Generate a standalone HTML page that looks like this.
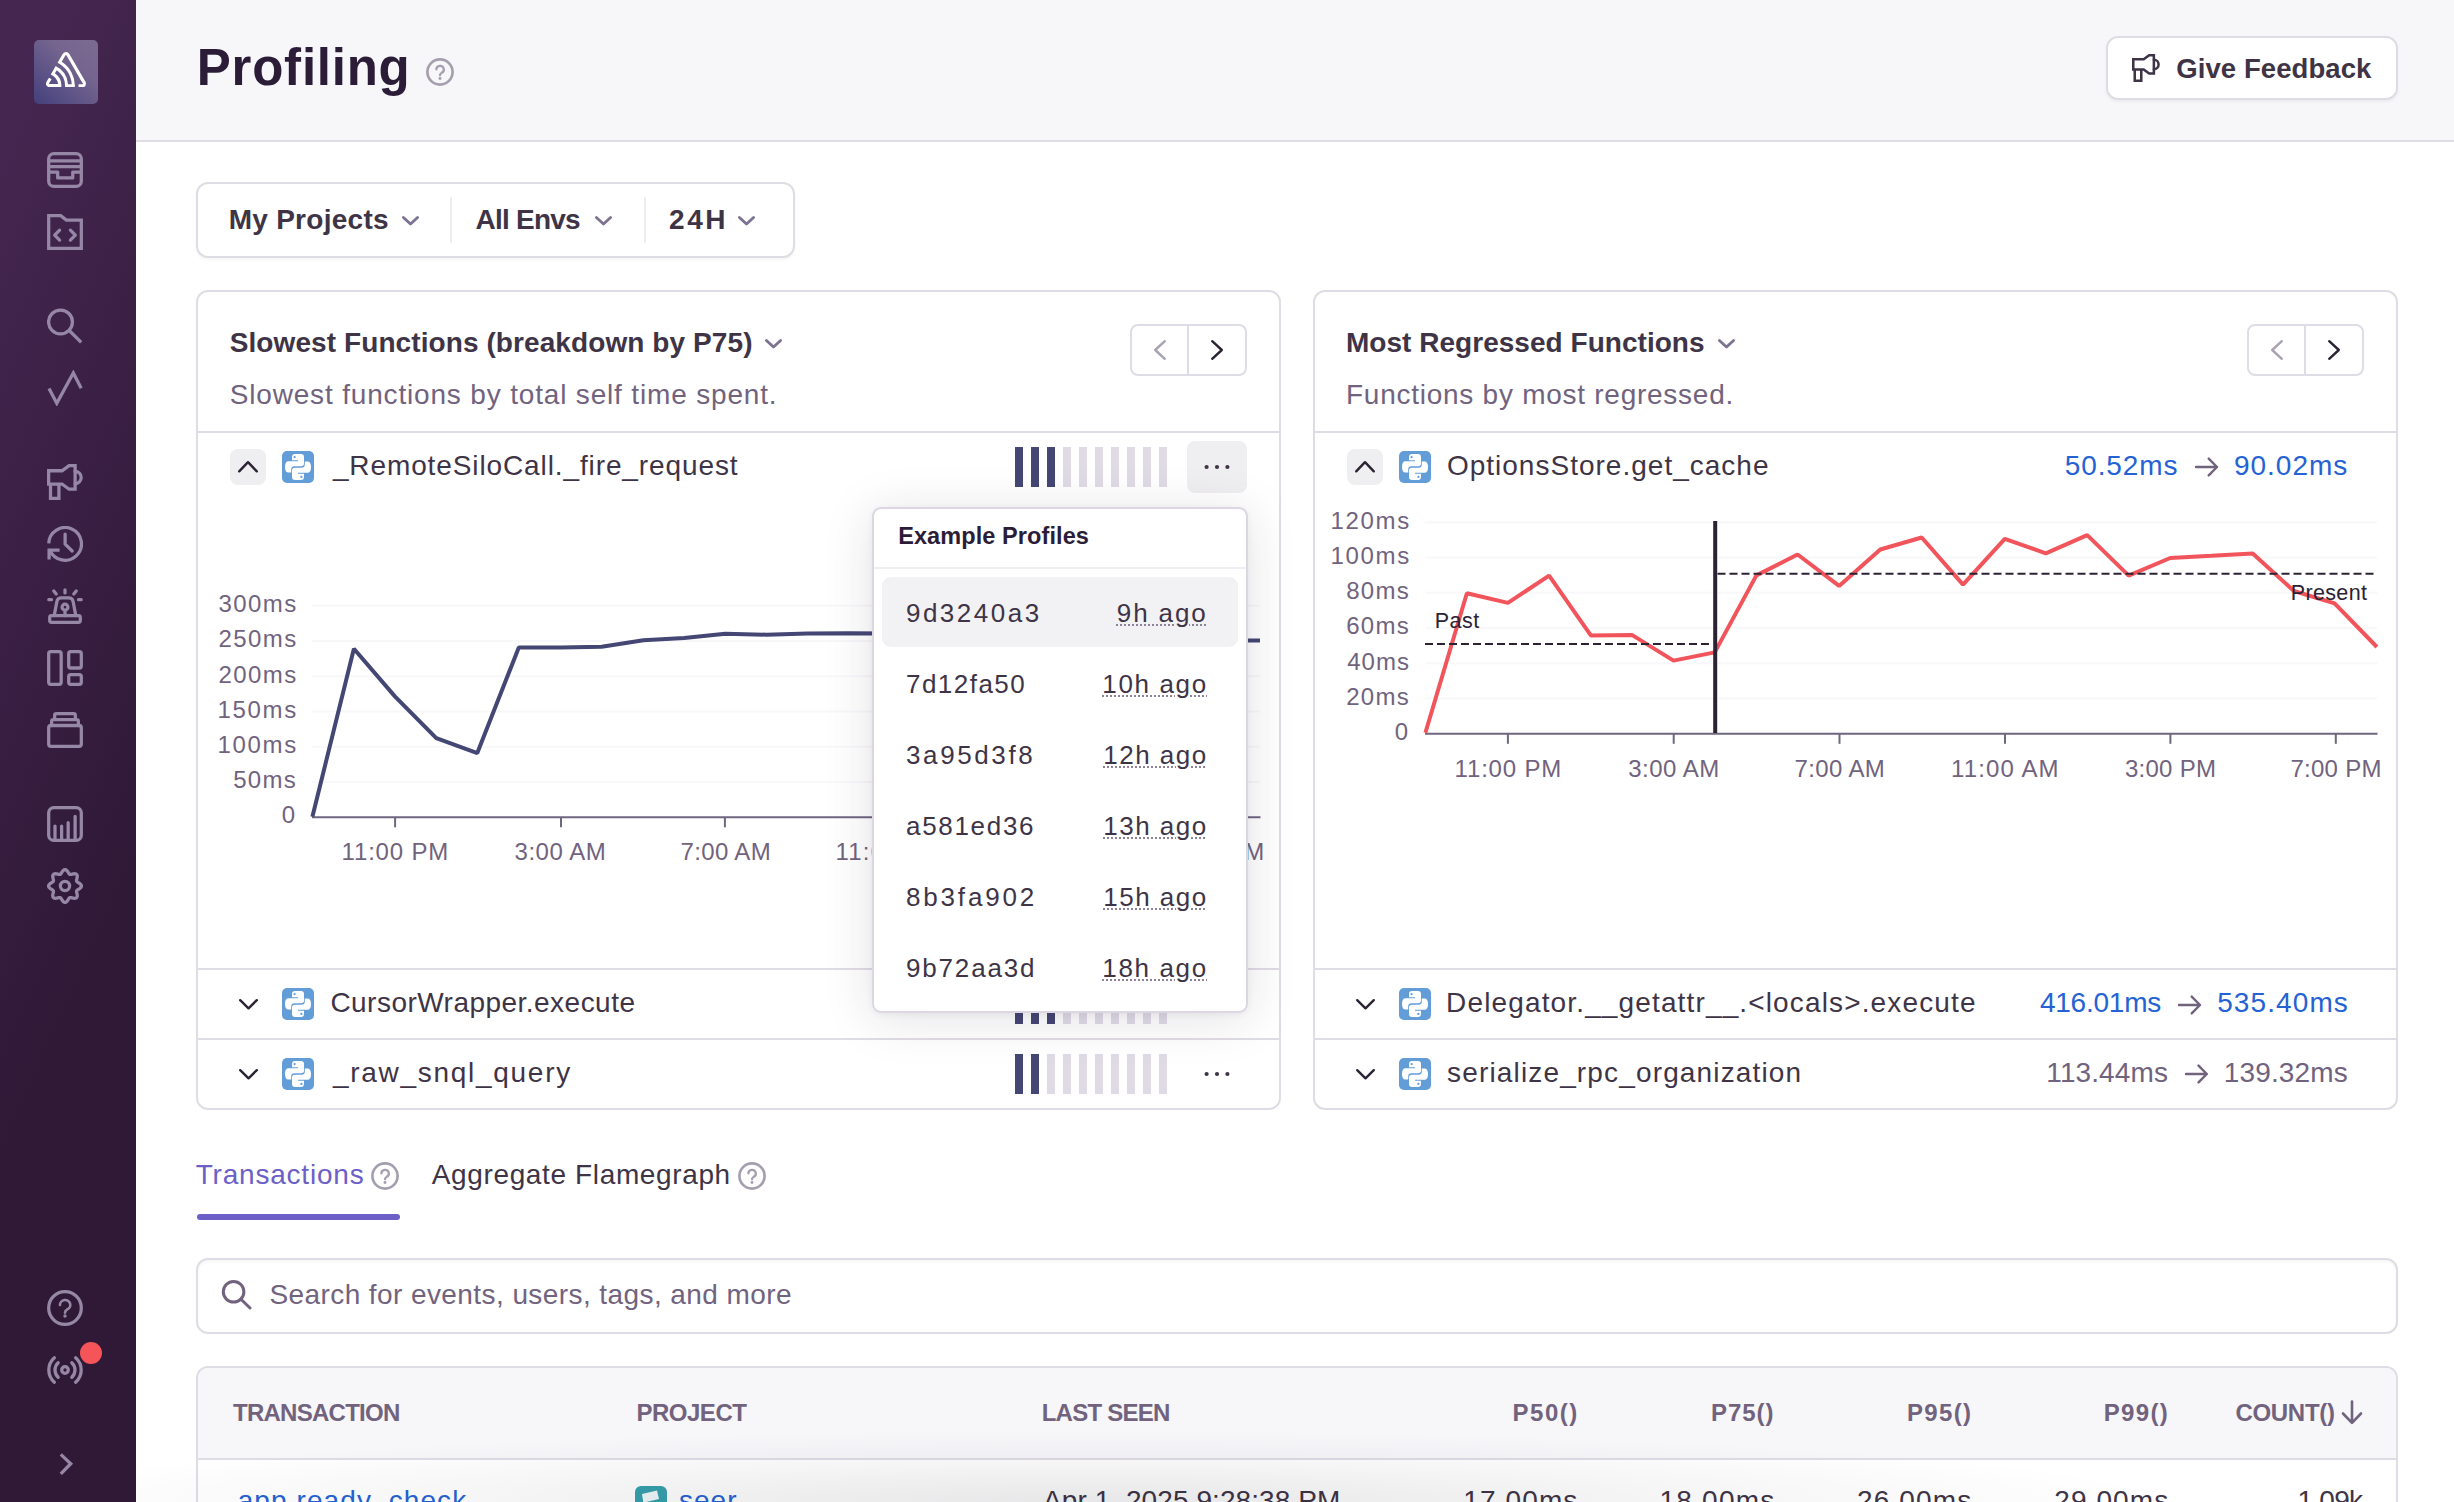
<!DOCTYPE html><html lang="en"><head><meta charset="utf-8"><title>Profiling</title><style>
*{box-sizing:border-box}
html,body{margin:0;padding:0}
body{width:2454px;height:1502px;overflow:hidden;position:relative;background:#fff;font-family:"Liberation Sans",sans-serif}
.a{position:absolute}
.t{position:absolute;white-space:pre;line-height:1;font-family:"Liberation Sans",sans-serif}
.box{position:absolute;border:2px solid #e0dce5;background:#fff}
.hl{position:absolute;height:2px;background:#e0dce5}
</style></head><body>
<div class="a" style="left:136px;top:0;width:2318px;height:140px;background:#f7f6f9"></div><div class="hl" style="left:136px;top:140px;width:2318px"></div>
<div class="a" style="left:0;top:0;width:136px;height:1502px;background:linear-gradient(294.17deg,#2f1937 35.57%,#452650 92.42%)"></div>
<div class="a" style="left:34px;top:40px;width:64px;height:64px;border-radius:5px;background:linear-gradient(42deg,#44407c 0%,#5c5286 32%,#76668f 66%,#7b6b93 100%)"></div>
<svg class="a" style="left:46.2px;top:52.3px" width="40" height="35.2" viewBox="0 0 50 44" ><path d="M29,2.26a4.67,4.67,0,0,0-8,0L14.42,13.53A32.21,32.21,0,0,1,32.17,40.19H27.55A27.68,27.68,0,0,0,12.09,17.47L6,28a15.92,15.92,0,0,1,9.23,12.17H4.62A.76.76,0,0,1,4,39.06l2.94-5a10.74,10.74,0,0,0-3.36-1.9l-2.91,5a4.54,4.54,0,0,0,1.69,6.24A4.66,4.66,0,0,0,4.62,44H19.15a19.4,19.4,0,0,0-8-17.31l2.31-4A23.87,23.87,0,0,1,23.76,44H36.07a35.88,35.88,0,0,0-16.41-31.8l4.67-8a.77.77,0,0,1,1.05-.27c.53.29,20.29,34.77,20.66,35.17a.76.76,0,0,1-.68,1.13H40.6q.09,1.91,0,3.81h4.78A4.59,4.59,0,0,0,50,39.43a4.49,4.49,0,0,0-.62-2.28Z" fill="#fff"/></svg>
<svg class="a" style="left:47px;top:152px" width="36" height="36" viewBox="0 0 16 16" ><g fill="none" stroke="#9687a6" stroke-width="1.45" stroke-linecap="round" stroke-linejoin="round"><rect x=".75" y=".75" width="14.5" height="14.5" rx="2.3"/><path d="M.75 3.9H15.25M.75 6.5H15.25M.75 8.9H4.75V11.5H11.45V8.9H15.25"/></g></svg>
<svg class="a" style="left:47px;top:214px" width="36" height="36" viewBox="0 0 16 16" ><g fill="none" stroke="#9687a6" stroke-width="1.45" stroke-linecap="round" stroke-linejoin="round"><path d="M.75 .75H6.1L8.6 2.7H15.25V15.25H.75Z" stroke-linejoin="miter"/><path d="M5.6 7.2L3.4 9.4L5.6 11.6M10.4 7.2L12.6 9.4L10.4 11.6"/></g></svg>
<svg class="a" style="left:47px;top:307.5px" width="36" height="36" viewBox="0 0 16 16" ><g fill="none" stroke="#9687a6" stroke-width="1.45" stroke-linecap="round" stroke-linejoin="round"><circle cx="6" cy="6.2" r="5.3"/><path d="M10 10.1L15.2 15.3" stroke-linecap="butt"/></g></svg>
<svg class="a" style="left:47px;top:370px" width="36" height="36" viewBox="0 0 16 16" ><g fill="none" stroke="#9687a6" stroke-width="1.45" stroke-linecap="round" stroke-linejoin="round"><path d="M.9 8.2L4.35 14.8L11.7 1.3L15.2 8.1" stroke-linejoin="miter" stroke-linecap="butt"/></g></svg>
<svg class="a" style="left:47px;top:464px" width="36" height="36" viewBox="0 0 16 16" ><g fill="none" stroke="#9687a6" stroke-width="1.45" stroke-linecap="round" stroke-linejoin="round"><path d="M.73 3H6.7L9.8 .74H12.5V11.2H9.8L6.7 8.9H.73Z" stroke-linejoin="miter"/><path d="M12.5 3.3A2.7 2.7 0 0 1 12.5 8.7"/><path d="M1.56 8.9V15.3H5.3V8.9" stroke-linejoin="miter" stroke-linecap="butt"/></g></svg>
<svg class="a" style="left:47px;top:526px" width="36" height="36" viewBox="0 0 16 16" ><g fill="none" stroke="#9687a6" stroke-width="1.45" stroke-linecap="round" stroke-linejoin="round"><path d="M.78 7.7A7.27 7.27 0 1 1 1.31 10.7" stroke-linecap="butt"/><path d="M5.6 10.75H.93V14.9" stroke-linejoin="miter" stroke-linecap="butt"/><path d="M8.05 3.6V8.05L11.2 11.1"/></g></svg>
<svg class="a" style="left:47px;top:588px" width="36" height="36" viewBox="0 0 16 16" ><g fill="none" stroke="#9687a6" stroke-width="1.45" stroke-linecap="round" stroke-linejoin="round"><rect x="1.2" y="12.3" width="13.6" height="2.95" rx=".8"/><path d="M3.2 12.3L4.4 6Q4.7 4.4 6.3 4.4H9.7Q11.3 4.4 11.6 6L12.8 12.3"/><circle cx="8" cy="8.5" r="1.3"/><path d="M8 9.9V12.3M8 .8V2.2M3 1.3L4.1 2.7M13 1.3L11.9 2.7M.8 5.2H2M14 5.2H15.2"/></g></svg>
<svg class="a" style="left:47px;top:650px" width="36" height="36" viewBox="0 0 16 16" ><g fill="none" stroke="#9687a6" stroke-width="1.45" stroke-linecap="round" stroke-linejoin="round"><rect x=".75" y=".75" width="5.55" height="14.5" rx=".9"/><rect x="9.65" y=".75" width="5.6" height="7.25" rx=".9"/><rect x="9.65" y="10.9" width="5.6" height="4.35" rx=".9"/></g></svg>
<svg class="a" style="left:47px;top:712px" width="36" height="36" viewBox="0 0 16 16" ><g fill="none" stroke="#9687a6" stroke-width="1.45" stroke-linecap="round" stroke-linejoin="round"><rect x=".75" y="6" width="14.5" height="9.25" rx="1"/><path d="M2.05 6V4.2Q2.05 3.4 2.85 3.4H13.15Q13.95 3.4 13.95 4.2V6M3.4 3.4V1.5Q3.4 .75 4.2 .75H11.8Q12.6 .75 12.6 1.5V3.4"/></g></svg>
<svg class="a" style="left:47px;top:806px" width="36" height="36" viewBox="0 0 16 16" ><g fill="none" stroke="#9687a6" stroke-width="1.45" stroke-linecap="round" stroke-linejoin="round"><rect x=".75" y=".75" width="14.5" height="14.5" rx="2.3"/><path d="M3.55 15V8.9M6.5 15V8.9M9.4 15V7.4M12.5 15V4.6"/></g></svg>
<svg class="a" style="left:47px;top:868px" width="36" height="36" viewBox="0 0 16 16" ><g fill="none" stroke="#9687a6" stroke-width="1.45" stroke-linecap="round" stroke-linejoin="round"><path d="M8.00 0.70 L8.28 0.75 L8.56 0.88 L8.82 1.10 L9.05 1.37 L9.26 1.67 L9.44 1.98 L9.62 2.27 L9.78 2.52 L9.95 2.71 L10.14 2.83 L10.36 2.88 L10.62 2.87 L10.91 2.81 L11.23 2.72 L11.58 2.64 L11.95 2.57 L12.30 2.54 L12.64 2.57 L12.93 2.67 L13.16 2.84 L13.33 3.07 L13.43 3.36 L13.46 3.70 L13.43 4.05 L13.36 4.42 L13.28 4.77 L13.19 5.09 L13.13 5.38 L13.12 5.64 L13.17 5.86 L13.29 6.05 L13.48 6.22 L13.73 6.38 L14.02 6.56 L14.33 6.74 L14.63 6.95 L14.90 7.18 L15.12 7.44 L15.25 7.72 L15.30 8.00 L15.25 8.28 L15.12 8.56 L14.90 8.82 L14.63 9.05 L14.33 9.26 L14.02 9.44 L13.73 9.62 L13.48 9.78 L13.29 9.95 L13.17 10.14 L13.12 10.36 L13.13 10.62 L13.19 10.91 L13.28 11.23 L13.36 11.58 L13.43 11.95 L13.46 12.30 L13.43 12.64 L13.33 12.93 L13.16 13.16 L12.93 13.33 L12.64 13.43 L12.30 13.46 L11.95 13.43 L11.58 13.36 L11.23 13.28 L10.91 13.19 L10.62 13.13 L10.36 13.12 L10.14 13.17 L9.95 13.29 L9.78 13.48 L9.62 13.73 L9.44 14.02 L9.26 14.33 L9.05 14.63 L8.82 14.90 L8.56 15.12 L8.28 15.25 L8.00 15.30 L7.72 15.25 L7.44 15.12 L7.18 14.90 L6.95 14.63 L6.74 14.33 L6.56 14.02 L6.38 13.73 L6.22 13.48 L6.05 13.29 L5.86 13.17 L5.64 13.12 L5.38 13.13 L5.09 13.19 L4.77 13.28 L4.42 13.36 L4.05 13.43 L3.70 13.46 L3.36 13.43 L3.07 13.33 L2.84 13.16 L2.67 12.93 L2.57 12.64 L2.54 12.30 L2.57 11.95 L2.64 11.58 L2.72 11.23 L2.81 10.91 L2.87 10.62 L2.88 10.36 L2.83 10.14 L2.71 9.95 L2.52 9.78 L2.27 9.62 L1.98 9.44 L1.67 9.26 L1.37 9.05 L1.10 8.82 L0.88 8.56 L0.75 8.28 L0.70 8.00 L0.75 7.72 L0.88 7.44 L1.10 7.18 L1.37 6.95 L1.67 6.74 L1.98 6.56 L2.27 6.38 L2.52 6.22 L2.71 6.05 L2.83 5.86 L2.88 5.64 L2.87 5.38 L2.81 5.09 L2.72 4.77 L2.64 4.42 L2.57 4.05 L2.54 3.70 L2.57 3.36 L2.67 3.07 L2.84 2.84 L3.07 2.67 L3.36 2.57 L3.70 2.54 L4.05 2.57 L4.42 2.64 L4.77 2.72 L5.09 2.81 L5.38 2.87 L5.64 2.88 L5.86 2.83 L6.05 2.71 L6.22 2.52 L6.38 2.27 L6.56 1.98 L6.74 1.67 L6.95 1.37 L7.18 1.10 L7.44 0.88 L7.72 0.75 Z"/><circle cx="8" cy="8" r="2.05"/></g></svg>
<svg class="a" style="left:47px;top:1290px" width="36" height="36" viewBox="0 0 16 16" ><g fill="none" stroke="#9687a6" stroke-width="1.45" stroke-linecap="round" stroke-linejoin="round"><circle cx="8" cy="8" r="7.25"/><path d="M5.75 6.7A2.3 2.2 0 1 1 8.9 8.7Q8 9.2 8 10.1" stroke-width="1.15"/><circle cx="8" cy="11.55" r=".75" fill="#9687a6" stroke="none"/></g></svg>
<svg class="a" style="left:47px;top:1352px" width="36" height="36" viewBox="0 0 16 16" ><g fill="none" stroke="#9687a6" stroke-width="1.45" stroke-linecap="round" stroke-linejoin="round"><circle cx="8" cy="8" r="1.45"/><path d="M4.97 11.25 A4.45 4.45 0 0 1 4.97 4.75"/><path d="M11.03 4.75 A4.45 4.45 0 0 1 11.03 11.25"/><path d="M3.28 13.43 A7.2 7.2 0 0 1 3.28 2.57"/><path d="M12.72 2.57 A7.2 7.2 0 0 1 12.72 13.43"/></g></svg>
<svg class="a" style="left:55px;top:1452px" width="24" height="24" viewBox="0 0 24 24" ><path d="M5.8 2.4L15.7 11.7L5.8 21.8" fill="none" stroke="#9687a6" stroke-width="3.3" stroke-linecap="butt" stroke-linejoin="miter"/></svg>
<div class="a" style="left:80px;top:1342px;width:22px;height:22px;border-radius:50%;background:#f55459"></div>
<svg class="a" style="left:426px;top:57.7px" width="28" height="28" viewBox="0 0 16 16"><g fill="none" stroke="#a49eaf" stroke-linecap="round" stroke-linejoin="round"><circle cx="8" cy="8" r="7.2" stroke-width="1.5"/><path d="M5.9 6.5A2.15 2.1 0 1 1 8.9 8.5Q8 9 8 9.9" stroke-width="1.25"/></g><circle cx="8" cy="11.7" r=".85" fill="#a49eaf"/></svg>
<div class="box" style="left:2106px;top:36px;width:292px;height:64px;border-radius:12px;box-shadow:0 2px 3px rgba(43,34,51,.05)"></div>
<svg class="a" style="left:2132px;top:54px" width="28" height="28" viewBox="0 0 16 16" ><g fill="none" stroke="#3e3446" stroke-width="1.45" stroke-linecap="round" stroke-linejoin="round"><path d="M.73 3H6.7L9.8 .74H12.5V11.2H9.8L6.7 8.9H.73Z" stroke-linejoin="miter"/><path d="M12.5 3.3A2.7 2.7 0 0 1 12.5 8.7"/><path d="M1.56 8.9V15.3H5.3V8.9" stroke-linejoin="miter" stroke-linecap="butt"/></g></svg>
<div class="box" style="left:196px;top:182px;width:599px;height:76px;border-radius:12px;box-shadow:0 2px 3px rgba(43,34,51,.04)"></div>
<div class="a" style="left:450px;top:197px;width:2px;height:46px;background:#efecf2"></div><div class="a" style="left:644px;top:197px;width:2px;height:46px;background:#efecf2"></div>
<svg class="a" style="left:401.8px;top:216px;overflow:visible" width="17" height="9.5"><path d="M1.4 1.4L8.5 8.1L15.6 1.4" fill="none" stroke="#7d7290" stroke-width="2.8" stroke-linecap="round" stroke-linejoin="round"/></svg>
<svg class="a" style="left:595px;top:216px;overflow:visible" width="17" height="9.5"><path d="M1.4 1.4L8.5 8.1L15.6 1.4" fill="none" stroke="#7d7290" stroke-width="2.8" stroke-linecap="round" stroke-linejoin="round"/></svg>
<svg class="a" style="left:738.3px;top:216px;overflow:visible" width="17" height="9.5"><path d="M1.4 1.4L8.5 8.1L15.6 1.4" fill="none" stroke="#7d7290" stroke-width="2.8" stroke-linecap="round" stroke-linejoin="round"/></svg>
<div class="box" style="left:196px;top:290px;width:1085px;height:820px;border-radius:12px"></div>
<div class="box" style="left:1313px;top:290px;width:1085px;height:820px;border-radius:12px"></div>
<div class="hl" style="left:198px;top:431px;width:1081px"></div>
<div class="hl" style="left:198px;top:968px;width:1081px"></div>
<div class="hl" style="left:198px;top:1038px;width:1081px"></div>
<div class="hl" style="left:1315px;top:431px;width:1081px"></div>
<div class="hl" style="left:1315px;top:968px;width:1081px"></div>
<div class="hl" style="left:1315px;top:1038px;width:1081px"></div>
<svg class="a" style="left:764.6px;top:339px;overflow:visible" width="17" height="9.5"><path d="M1.4 1.4L8.5 8.1L15.6 1.4" fill="none" stroke="#7d7290" stroke-width="2.8" stroke-linecap="round" stroke-linejoin="round"/></svg>
<svg class="a" style="left:1718.4px;top:339px;overflow:visible" width="17" height="9.5"><path d="M1.4 1.4L8.5 8.1L15.6 1.4" fill="none" stroke="#7d7290" stroke-width="2.8" stroke-linecap="round" stroke-linejoin="round"/></svg>
<div class="box" style="left:1130px;top:324px;width:117px;height:52px;border-radius:8px"></div><div class="a" style="left:1187px;top:324px;width:2px;height:52px;background:#e0dce5"></div>
<svg class="a" style="left:1153.5px;top:340px;overflow:visible" width="12" height="20"><path d="M10.8 1.2L1.2 10.0L10.8 18.8" fill="none" stroke="#a8a2b3" stroke-width="2.4" stroke-linecap="round" stroke-linejoin="round"/></svg>
<svg class="a" style="left:1211px;top:340px;overflow:visible" width="12" height="20"><path d="M1.2 1.2L10.8 10.0L1.2 18.8" fill="none" stroke="#2b2233" stroke-width="2.4" stroke-linecap="round" stroke-linejoin="round"/></svg>
<div class="box" style="left:2247px;top:324px;width:117px;height:52px;border-radius:8px"></div><div class="a" style="left:2304px;top:324px;width:2px;height:52px;background:#e0dce5"></div>
<svg class="a" style="left:2270.5px;top:340px;overflow:visible" width="12" height="20"><path d="M10.8 1.2L1.2 10.0L10.8 18.8" fill="none" stroke="#a8a2b3" stroke-width="2.4" stroke-linecap="round" stroke-linejoin="round"/></svg>
<svg class="a" style="left:2328px;top:340px;overflow:visible" width="12" height="20"><path d="M1.2 1.2L10.8 10.0L1.2 18.8" fill="none" stroke="#2b2233" stroke-width="2.4" stroke-linecap="round" stroke-linejoin="round"/></svg>
<div class="a" style="left:230px;top:449px;width:36px;height:36px;border-radius:8px;background:#efeef0"></div>
<svg class="a" style="left:238px;top:461px;overflow:visible" width="20" height="11.5"><path d="M1.2 10.3L10.0 1.2L18.8 10.3" fill="none" stroke="#2b2233" stroke-width="2.4" stroke-linecap="round" stroke-linejoin="round"/></svg>
<svg class="a" style="left:282px;top:451px" width="32" height="32" viewBox="0 0 32 32"><rect width="32" height="32" rx="5" fill="#639dd8"/><g fill="#fff" fill-rule="evenodd"><path d="M13 3H19Q22 3 22 6V12.5Q22 15.3 19.2 15.3H12.5Q9.2 15.3 9.2 18.5V21.6H6.5Q3 21.6 3 16Q3 10.2 6.5 10.2H16V9.3H10V6Q10 3 13 3ZM12.6 4.9A1.15 1.15 0 1 1 12.6 7.2A1.15 1.15 0 1 1 12.6 4.9Z"/><path d="M13 3H19Q22 3 22 6V12.5Q22 15.3 19.2 15.3H12.5Q9.2 15.3 9.2 18.5V21.6H6.5Q3 21.6 3 16Q3 10.2 6.5 10.2H16V9.3H10V6Q10 3 13 3ZM12.6 4.9A1.15 1.15 0 1 1 12.6 7.2A1.15 1.15 0 1 1 12.6 4.9Z" transform="rotate(180 16 16)"/></g></svg>
<svg class="a" style="left:1015px;top:447px" width="152" height="40"><rect x="0" y="0" width="8" height="40" fill="#444674"/><rect x="16" y="0" width="8" height="40" fill="#444674"/><rect x="32" y="0" width="8" height="40" fill="#444674"/><rect x="48" y="0" width="8" height="40" fill="#dfdbe6"/><rect x="64" y="0" width="8" height="40" fill="#dfdbe6"/><rect x="80" y="0" width="8" height="40" fill="#dfdbe6"/><rect x="96" y="0" width="8" height="40" fill="#dfdbe6"/><rect x="112" y="0" width="8" height="40" fill="#dfdbe6"/><rect x="128" y="0" width="8" height="40" fill="#dfdbe6"/><rect x="144" y="0" width="8" height="40" fill="#dfdbe6"/></svg>
<div class="a" style="left:1187px;top:441px;width:60px;height:52px;border-radius:8px;background:#efeef0"></div>
<svg class="a" style="left:1203px;top:464px" width="28" height="6"><circle cx="3.6" cy="3" r="2.1" fill="#3e3446"/><circle cx="14" cy="3" r="2.1" fill="#3e3446"/><circle cx="24.4" cy="3" r="2.1" fill="#3e3446"/></svg>
<svg class="a" style="left:238.5px;top:999px;overflow:visible" width="19" height="10.5"><path d="M1.2 1.2L9.5 9.3L17.8 1.2" fill="none" stroke="#2b2233" stroke-width="2.4" stroke-linecap="round" stroke-linejoin="round"/></svg>
<svg class="a" style="left:282px;top:988px" width="32" height="32" viewBox="0 0 32 32"><rect width="32" height="32" rx="5" fill="#639dd8"/><g fill="#fff" fill-rule="evenodd"><path d="M13 3H19Q22 3 22 6V12.5Q22 15.3 19.2 15.3H12.5Q9.2 15.3 9.2 18.5V21.6H6.5Q3 21.6 3 16Q3 10.2 6.5 10.2H16V9.3H10V6Q10 3 13 3ZM12.6 4.9A1.15 1.15 0 1 1 12.6 7.2A1.15 1.15 0 1 1 12.6 4.9Z"/><path d="M13 3H19Q22 3 22 6V12.5Q22 15.3 19.2 15.3H12.5Q9.2 15.3 9.2 18.5V21.6H6.5Q3 21.6 3 16Q3 10.2 6.5 10.2H16V9.3H10V6Q10 3 13 3ZM12.6 4.9A1.15 1.15 0 1 1 12.6 7.2A1.15 1.15 0 1 1 12.6 4.9Z" transform="rotate(180 16 16)"/></g></svg>
<svg class="a" style="left:1015px;top:984px" width="152" height="40"><rect x="0" y="0" width="8" height="40" fill="#444674"/><rect x="16" y="0" width="8" height="40" fill="#444674"/><rect x="32" y="0" width="8" height="40" fill="#444674"/><rect x="48" y="0" width="8" height="40" fill="#dfdbe6"/><rect x="64" y="0" width="8" height="40" fill="#dfdbe6"/><rect x="80" y="0" width="8" height="40" fill="#dfdbe6"/><rect x="96" y="0" width="8" height="40" fill="#dfdbe6"/><rect x="112" y="0" width="8" height="40" fill="#dfdbe6"/><rect x="128" y="0" width="8" height="40" fill="#dfdbe6"/><rect x="144" y="0" width="8" height="40" fill="#dfdbe6"/></svg>
<svg class="a" style="left:1203px;top:1001px" width="28" height="6"><circle cx="3.6" cy="3" r="2.1" fill="#3e3446"/><circle cx="14" cy="3" r="2.1" fill="#3e3446"/><circle cx="24.4" cy="3" r="2.1" fill="#3e3446"/></svg>
<svg class="a" style="left:238.5px;top:1069px;overflow:visible" width="19" height="10.5"><path d="M1.2 1.2L9.5 9.3L17.8 1.2" fill="none" stroke="#2b2233" stroke-width="2.4" stroke-linecap="round" stroke-linejoin="round"/></svg>
<svg class="a" style="left:282px;top:1058px" width="32" height="32" viewBox="0 0 32 32"><rect width="32" height="32" rx="5" fill="#639dd8"/><g fill="#fff" fill-rule="evenodd"><path d="M13 3H19Q22 3 22 6V12.5Q22 15.3 19.2 15.3H12.5Q9.2 15.3 9.2 18.5V21.6H6.5Q3 21.6 3 16Q3 10.2 6.5 10.2H16V9.3H10V6Q10 3 13 3ZM12.6 4.9A1.15 1.15 0 1 1 12.6 7.2A1.15 1.15 0 1 1 12.6 4.9Z"/><path d="M13 3H19Q22 3 22 6V12.5Q22 15.3 19.2 15.3H12.5Q9.2 15.3 9.2 18.5V21.6H6.5Q3 21.6 3 16Q3 10.2 6.5 10.2H16V9.3H10V6Q10 3 13 3ZM12.6 4.9A1.15 1.15 0 1 1 12.6 7.2A1.15 1.15 0 1 1 12.6 4.9Z" transform="rotate(180 16 16)"/></g></svg>
<svg class="a" style="left:1015px;top:1054px" width="152" height="40"><rect x="0" y="0" width="8" height="40" fill="#444674"/><rect x="16" y="0" width="8" height="40" fill="#444674"/><rect x="32" y="0" width="8" height="40" fill="#dfdbe6"/><rect x="48" y="0" width="8" height="40" fill="#dfdbe6"/><rect x="64" y="0" width="8" height="40" fill="#dfdbe6"/><rect x="80" y="0" width="8" height="40" fill="#dfdbe6"/><rect x="96" y="0" width="8" height="40" fill="#dfdbe6"/><rect x="112" y="0" width="8" height="40" fill="#dfdbe6"/><rect x="128" y="0" width="8" height="40" fill="#dfdbe6"/><rect x="144" y="0" width="8" height="40" fill="#dfdbe6"/></svg>
<svg class="a" style="left:1203px;top:1071.3px" width="28" height="6"><circle cx="3.6" cy="3" r="2.1" fill="#3e3446"/><circle cx="14" cy="3" r="2.1" fill="#3e3446"/><circle cx="24.4" cy="3" r="2.1" fill="#3e3446"/></svg>
<div class="a" style="left:1347px;top:449px;width:36px;height:36px;border-radius:8px;background:#efeef0"></div>
<svg class="a" style="left:1355px;top:461px;overflow:visible" width="20" height="11.5"><path d="M1.2 10.3L10.0 1.2L18.8 10.3" fill="none" stroke="#2b2233" stroke-width="2.4" stroke-linecap="round" stroke-linejoin="round"/></svg>
<svg class="a" style="left:1399px;top:451px" width="32" height="32" viewBox="0 0 32 32"><rect width="32" height="32" rx="5" fill="#639dd8"/><g fill="#fff" fill-rule="evenodd"><path d="M13 3H19Q22 3 22 6V12.5Q22 15.3 19.2 15.3H12.5Q9.2 15.3 9.2 18.5V21.6H6.5Q3 21.6 3 16Q3 10.2 6.5 10.2H16V9.3H10V6Q10 3 13 3ZM12.6 4.9A1.15 1.15 0 1 1 12.6 7.2A1.15 1.15 0 1 1 12.6 4.9Z"/><path d="M13 3H19Q22 3 22 6V12.5Q22 15.3 19.2 15.3H12.5Q9.2 15.3 9.2 18.5V21.6H6.5Q3 21.6 3 16Q3 10.2 6.5 10.2H16V9.3H10V6Q10 3 13 3ZM12.6 4.9A1.15 1.15 0 1 1 12.6 7.2A1.15 1.15 0 1 1 12.6 4.9Z" transform="rotate(180 16 16)"/></g></svg>
<svg class="a" style="left:1355.5px;top:999px;overflow:visible" width="19" height="10.5"><path d="M1.2 1.2L9.5 9.3L17.8 1.2" fill="none" stroke="#2b2233" stroke-width="2.4" stroke-linecap="round" stroke-linejoin="round"/></svg>
<svg class="a" style="left:1399px;top:988px" width="32" height="32" viewBox="0 0 32 32"><rect width="32" height="32" rx="5" fill="#639dd8"/><g fill="#fff" fill-rule="evenodd"><path d="M13 3H19Q22 3 22 6V12.5Q22 15.3 19.2 15.3H12.5Q9.2 15.3 9.2 18.5V21.6H6.5Q3 21.6 3 16Q3 10.2 6.5 10.2H16V9.3H10V6Q10 3 13 3ZM12.6 4.9A1.15 1.15 0 1 1 12.6 7.2A1.15 1.15 0 1 1 12.6 4.9Z"/><path d="M13 3H19Q22 3 22 6V12.5Q22 15.3 19.2 15.3H12.5Q9.2 15.3 9.2 18.5V21.6H6.5Q3 21.6 3 16Q3 10.2 6.5 10.2H16V9.3H10V6Q10 3 13 3ZM12.6 4.9A1.15 1.15 0 1 1 12.6 7.2A1.15 1.15 0 1 1 12.6 4.9Z" transform="rotate(180 16 16)"/></g></svg>
<svg class="a" style="left:1355.5px;top:1069px;overflow:visible" width="19" height="10.5"><path d="M1.2 1.2L9.5 9.3L17.8 1.2" fill="none" stroke="#2b2233" stroke-width="2.4" stroke-linecap="round" stroke-linejoin="round"/></svg>
<svg class="a" style="left:1399px;top:1058px" width="32" height="32" viewBox="0 0 32 32"><rect width="32" height="32" rx="5" fill="#639dd8"/><g fill="#fff" fill-rule="evenodd"><path d="M13 3H19Q22 3 22 6V12.5Q22 15.3 19.2 15.3H12.5Q9.2 15.3 9.2 18.5V21.6H6.5Q3 21.6 3 16Q3 10.2 6.5 10.2H16V9.3H10V6Q10 3 13 3ZM12.6 4.9A1.15 1.15 0 1 1 12.6 7.2A1.15 1.15 0 1 1 12.6 4.9Z"/><path d="M13 3H19Q22 3 22 6V12.5Q22 15.3 19.2 15.3H12.5Q9.2 15.3 9.2 18.5V21.6H6.5Q3 21.6 3 16Q3 10.2 6.5 10.2H16V9.3H10V6Q10 3 13 3ZM12.6 4.9A1.15 1.15 0 1 1 12.6 7.2A1.15 1.15 0 1 1 12.6 4.9Z" transform="rotate(180 16 16)"/></g></svg>
<svg class="a" style="left:2194.5px;top:457px;overflow:visible" width="23.199999999999818" height="20"><path d="M1 10H21.99999999999982M13.699999999999818 1.6L21.99999999999982 10L13.699999999999818 18.4" fill="none" stroke="#71637e" stroke-width="2.4" stroke-linecap="round" stroke-linejoin="round"/></svg>
<svg class="a" style="left:2177.5px;top:994.5px;overflow:visible" width="23.199999999999818" height="20"><path d="M1 10H21.99999999999982M13.699999999999818 1.6L21.99999999999982 10L13.699999999999818 18.4" fill="none" stroke="#71637e" stroke-width="2.4" stroke-linecap="round" stroke-linejoin="round"/></svg>
<svg class="a" style="left:2185.2px;top:1064.4px;overflow:visible" width="23.0" height="20"><path d="M1 10H21.8M13.5 1.6L21.8 10L13.5 18.4" fill="none" stroke="#71637e" stroke-width="2.4" stroke-linecap="round" stroke-linejoin="round"/></svg>
<svg class="a" style="left:0;top:0" width="2454" height="1000"><line x1="312" x2="1260" y1="605.7" y2="605.7" stroke="#f8f7fa" stroke-width="2"/><line x1="312" x2="1260" y1="641.0" y2="641.0" stroke="#f8f7fa" stroke-width="2"/><line x1="312" x2="1260" y1="676.2" y2="676.2" stroke="#f8f7fa" stroke-width="2"/><line x1="312" x2="1260" y1="711.5" y2="711.5" stroke="#f8f7fa" stroke-width="2"/><line x1="312" x2="1260" y1="746.8" y2="746.8" stroke="#f8f7fa" stroke-width="2"/><line x1="312" x2="1260" y1="782.1" y2="782.1" stroke="#f8f7fa" stroke-width="2"/><line x1="312" x2="1260.5" y1="817.3" y2="817.3" stroke="#6f6680" stroke-width="2"/><line x1="395.1" x2="395.1" y1="817.3" y2="827.3" stroke="#6f6680" stroke-width="2"/><line x1="561" x2="561" y1="817.3" y2="827.3" stroke="#6f6680" stroke-width="2"/><line x1="724.9" x2="724.9" y1="817.3" y2="827.3" stroke="#6f6680" stroke-width="2"/><line x1="890" x2="890" y1="817.3" y2="827.3" stroke="#6f6680" stroke-width="2"/><line x1="1054.8" x2="1054.8" y1="817.3" y2="827.3" stroke="#6f6680" stroke-width="2"/><line x1="1219.6" x2="1219.6" y1="817.3" y2="827.3" stroke="#6f6680" stroke-width="2"/><polyline points="312.4,816.8 353.9,648.7 395.1,696.6 436.3,738.1 477.3,753.1 518.8,647.4 560.5,647.4 601.7,646.7 643.4,640.2 684.1,637.9 725.4,633.7 766.6,634.7 807.8,633.4 849.0,633.2 890.2,633.4 931.4,634.0 972.6,635.0 1013.8,636.0 1055.0,637.0 1096.2,638.0 1137.4,639.0 1178.6,640.0 1219.8,640.5 1260.0,640.5" fill="none" stroke="#444674" stroke-width="4" stroke-linejoin="bevel" stroke-linecap="butt"/></svg>
<svg class="a" style="left:0;top:0" width="2454" height="1000"><line x1="1425" x2="2377" y1="522.3" y2="522.3" stroke="#f8f7fa" stroke-width="2"/><line x1="1425" x2="2377" y1="557.5" y2="557.5" stroke="#f8f7fa" stroke-width="2"/><line x1="1425" x2="2377" y1="592.7" y2="592.7" stroke="#f8f7fa" stroke-width="2"/><line x1="1425" x2="2377" y1="628.0" y2="628.0" stroke="#f8f7fa" stroke-width="2"/><line x1="1425" x2="2377" y1="663.2" y2="663.2" stroke="#f8f7fa" stroke-width="2"/><line x1="1425" x2="2377" y1="698.4" y2="698.4" stroke="#f8f7fa" stroke-width="2"/><line x1="1425" x2="2377.5" y1="733.8" y2="733.8" stroke="#6f6680" stroke-width="2"/><line x1="1507.9" x2="1507.9" y1="733.8" y2="743.8" stroke="#6f6680" stroke-width="2"/><line x1="1673.7" x2="1673.7" y1="733.8" y2="743.8" stroke="#6f6680" stroke-width="2"/><line x1="1839.5" x2="1839.5" y1="733.8" y2="743.8" stroke="#6f6680" stroke-width="2"/><line x1="2005" x2="2005" y1="733.8" y2="743.8" stroke="#6f6680" stroke-width="2"/><line x1="2170.4" x2="2170.4" y1="733.8" y2="743.8" stroke="#6f6680" stroke-width="2"/><line x1="2335.8" x2="2335.8" y1="733.8" y2="743.8" stroke="#6f6680" stroke-width="2"/><polyline points="1425.4,732.8 1466.9,593.2 1507.9,602.9 1549.1,575.7 1591.0,635.6 1632.3,635.1 1673.5,660.6 1714.7,652.4 1756.4,575.4 1797.6,554.5 1839.1,585.9 1880.3,549.5 1921.7,537.5 1963.0,584.6 2004.8,538.8 2045.8,553.4 2087.2,535.1 2128.7,575.6 2170.2,558.0 2211.4,555.8 2252.7,553.4 2293.9,591.0 2334.6,603.3 2376.9,647.0" fill="none" stroke="#f2545b" stroke-width="4" stroke-linejoin="bevel" stroke-linecap="butt"/><line x1="1715.2" x2="1715.2" y1="521" y2="733" stroke="#2b2233" stroke-width="4"/><line x1="1425" x2="1710" y1="643.9" y2="643.9" stroke="#2b2233" stroke-width="2" stroke-dasharray="8 4"/><line x1="1717.5" x2="2377" y1="573.8" y2="573.8" stroke="#2b2233" stroke-width="2" stroke-dasharray="8 4"/></svg>
<svg class="a" style="left:370.9px;top:1162.2px" width="28" height="28" viewBox="0 0 16 16"><g fill="none" stroke="#a49eaf" stroke-linecap="round" stroke-linejoin="round"><circle cx="8" cy="8" r="7.2" stroke-width="1.5"/><path d="M5.9 6.5A2.15 2.1 0 1 1 8.9 8.5Q8 9 8 9.9" stroke-width="1.25"/></g><circle cx="8" cy="11.7" r=".85" fill="#a49eaf"/></svg>
<svg class="a" style="left:738px;top:1162.2px" width="28" height="28" viewBox="0 0 16 16"><g fill="none" stroke="#a49eaf" stroke-linecap="round" stroke-linejoin="round"><circle cx="8" cy="8" r="7.2" stroke-width="1.5"/><path d="M5.9 6.5A2.15 2.1 0 1 1 8.9 8.5Q8 9 8 9.9" stroke-width="1.25"/></g><circle cx="8" cy="11.7" r=".85" fill="#a49eaf"/></svg>
<div class="a" style="left:196.5px;top:1213.5px;width:203px;height:6px;border-radius:3px;background:#6c5fc7"></div>
<div class="box" style="left:196px;top:1258px;width:2202px;height:76px;border-radius:12px;box-shadow:inset 0 2px 3px rgba(43,34,51,.04)"></div>
<svg class="a" style="left:220px;top:1278px" width="32" height="32"><circle cx="13.6" cy="13.8" r="10.3" fill="none" stroke="#71637e" stroke-width="3"/><path d="M21 21.2L30 30" stroke="#71637e" stroke-width="3" stroke-linecap="round"/></svg>
<div class="box" style="left:196px;top:1366px;width:2202px;height:300px;border-radius:12px;overflow:hidden"><div style="height:92px;background:#f7f6f9;border-bottom:2px solid #e0dce5"></div></div>
<svg class="a" style="left:2341px;top:1400px" width="22" height="25"><path d="M11 1.5V22.5M2 13.5L11 22.8L20 13.5" fill="none" stroke="#71637e" stroke-width="2.6" stroke-linecap="round" stroke-linejoin="round"/></svg>
<svg class="a" style="left:635px;top:1486px" width="32" height="32"><rect width="32" height="32" rx="6" fill="#36a0ad"/><path d="M7 8L22 4.5L24 13L11 16L13 24H9.5Z" fill="#fff" opacity=".92"/></svg>
<span class="t" style="left:196.8px;top:42.4px;font-size:51px;letter-spacing:0.77px;color:#2b1d38;font-weight:700;">Profiling</span>
<span class="t" style="left:2176.2px;top:54.6px;font-size:27.5px;letter-spacing:0.09px;color:#3e3446;font-weight:700;">Give Feedback</span>
<span class="t" style="left:228.7px;top:206.3px;font-size:28px;letter-spacing:0.27px;color:#3e3446;font-weight:700;">My Projects</span>
<span class="t" style="left:475.5px;top:206.3px;font-size:28px;letter-spacing:-0.76px;color:#3e3446;font-weight:700;">All Envs</span>
<span class="t" style="left:669.1px;top:206.3px;font-size:28px;letter-spacing:2.50px;color:#3e3446;font-weight:700;">24H</span>
<span class="t" style="left:229.7px;top:329.4px;font-size:28px;letter-spacing:0.09px;color:#3e3446;font-weight:700;">Slowest Functions (breakdown by P75)</span>
<span class="t" style="left:1346.0px;top:329.3px;font-size:28px;letter-spacing:0.03px;color:#3e3446;font-weight:700;">Most Regressed Functions</span>
<span class="t" style="left:229.7px;top:381.1px;font-size:28px;letter-spacing:0.83px;color:#71637e;">Slowest functions by total self time spent.</span>
<span class="t" style="left:1346.0px;top:381.2px;font-size:28px;letter-spacing:0.74px;color:#71637e;">Functions by most regressed.</span>
<span class="t" style="left:332.9px;top:451.6px;font-size:28px;letter-spacing:0.89px;color:#3e3446;">_RemoteSiloCall._fire_request</span>
<span class="t" style="left:1446.9px;top:451.7px;font-size:28px;letter-spacing:1.01px;color:#3e3446;">OptionsStore.get_cache</span>
<span class="t" style="left:330.4px;top:988.8px;font-size:28px;letter-spacing:0.47px;color:#3e3446;">CursorWrapper.execute</span>
<span class="t" style="left:332.9px;top:1058.7px;font-size:28px;letter-spacing:1.72px;color:#3e3446;">_raw_snql_query</span>
<span class="t" style="left:1446.1px;top:989.3px;font-size:28px;letter-spacing:1.14px;color:#3e3446;">Delegator.__getattr__.&lt;locals&gt;.execute</span>
<span class="t" style="left:1447.1px;top:1059.3px;font-size:28px;letter-spacing:1.15px;color:#3e3446;">serialize_rpc_organization</span>
<span class="t" style="left:2064.8px;top:452.4px;font-size:28px;letter-spacing:0.87px;color:#2562d4;">50.52ms</span>
<span class="t" style="left:2234.0px;top:452.4px;font-size:28px;letter-spacing:0.98px;color:#2562d4;">90.02ms</span>
<span class="t" style="left:2039.9px;top:989.3px;font-size:28px;letter-spacing:-0.23px;color:#2562d4;">416.01ms</span>
<span class="t" style="left:2217.2px;top:989.3px;font-size:28px;letter-spacing:1.10px;color:#2562d4;">535.40ms</span>
<span class="t" style="left:2046.3px;top:1059.2px;font-size:28px;letter-spacing:0.10px;color:#71637e;">113.44ms</span>
<span class="t" style="left:2223.7px;top:1059.2px;font-size:28px;letter-spacing:0.17px;color:#71637e;">139.32ms</span>
<span class="t" style="left:195.7px;top:1160.8px;font-size:28px;letter-spacing:0.79px;color:#6c5fc7;">Transactions</span>
<span class="t" style="left:431.8px;top:1160.8px;font-size:28px;letter-spacing:0.63px;color:#3e3446;">Aggregate Flamegraph</span>
<span class="t" style="left:269.4px;top:1281.2px;font-size:28px;letter-spacing:0.42px;color:#71637e;">Search for events, users, tags, and more</span>
<span class="t" style="left:233.0px;top:1400.8px;font-size:24px;letter-spacing:-0.74px;color:#71637e;font-weight:700;">TRANSACTION</span>
<span class="t" style="left:636.4px;top:1400.8px;font-size:24px;letter-spacing:-0.47px;color:#71637e;font-weight:700;">PROJECT</span>
<span class="t" style="left:1041.7px;top:1400.8px;font-size:24px;letter-spacing:-0.76px;color:#71637e;font-weight:700;">LAST SEEN</span>
<span class="t" style="left:1512.6px;top:1400.8px;font-size:24px;letter-spacing:1.50px;color:#71637e;font-weight:700;">P50()</span>
<span class="t" style="left:1711.0px;top:1400.8px;font-size:24px;letter-spacing:0.95px;color:#71637e;font-weight:700;">P75()</span>
<span class="t" style="left:1907.0px;top:1400.8px;font-size:24px;letter-spacing:1.35px;color:#71637e;font-weight:700;">P95()</span>
<span class="t" style="left:2103.8px;top:1400.8px;font-size:24px;letter-spacing:1.30px;color:#71637e;font-weight:700;">P99()</span>
<span class="t" style="left:2235.5px;top:1400.8px;font-size:24px;letter-spacing:-0.32px;color:#71637e;font-weight:700;">COUNT()</span>
<span class="t" style="left:237.7px;top:1487.0px;font-size:28px;letter-spacing:1.09px;color:#2562d4;">app.ready_check</span>
<span class="t" style="left:679.1px;top:1487.0px;font-size:28px;letter-spacing:0.97px;color:#2562d4;">seer</span>
<span class="t" style="left:1043.0px;top:1487.0px;font-size:28px;letter-spacing:0.07px;color:#3e3446;">Apr 1, 2025 9:28:38 PM</span>
<span class="t" style="left:1463.2px;top:1487.0px;font-size:28px;letter-spacing:1.13px;color:#3e3446;">17.00ms</span>
<span class="t" style="left:1659.5px;top:1487.0px;font-size:28px;letter-spacing:1.22px;color:#3e3446;">18.00ms</span>
<span class="t" style="left:1857.0px;top:1487.0px;font-size:28px;letter-spacing:1.15px;color:#3e3446;">26.00ms</span>
<span class="t" style="left:2054.3px;top:1487.0px;font-size:28px;letter-spacing:1.08px;color:#3e3446;">29.00ms</span>
<span class="t" style="left:2297.4px;top:1487.0px;font-size:28px;letter-spacing:-0.70px;color:#3e3446;">1.09k</span>
<span class="t" style="left:218.5px;top:592.2px;font-size:24px;letter-spacing:1.42px;color:#71637e;">300ms</span>
<span class="t" style="left:218.5px;top:627.4px;font-size:24px;letter-spacing:1.42px;color:#71637e;">250ms</span>
<span class="t" style="left:218.5px;top:662.6px;font-size:24px;letter-spacing:1.42px;color:#71637e;">200ms</span>
<span class="t" style="left:217.5px;top:697.8px;font-size:24px;letter-spacing:1.67px;color:#71637e;">150ms</span>
<span class="t" style="left:217.5px;top:733.0px;font-size:24px;letter-spacing:1.67px;color:#71637e;">100ms</span>
<span class="t" style="left:233.2px;top:768.2px;font-size:24px;letter-spacing:1.33px;color:#71637e;">50ms</span>
<span class="t" style="left:281.7px;top:803.4px;font-size:24px;letter-spacing:0.00px;color:#71637e;">0</span>
<span class="t" style="left:1330.5px;top:508.8px;font-size:24px;letter-spacing:1.68px;color:#71637e;">120ms</span>
<span class="t" style="left:1330.5px;top:544.0px;font-size:24px;letter-spacing:1.68px;color:#71637e;">100ms</span>
<span class="t" style="left:1346.2px;top:579.2px;font-size:24px;letter-spacing:1.33px;color:#71637e;">80ms</span>
<span class="t" style="left:1346.2px;top:614.4px;font-size:24px;letter-spacing:1.33px;color:#71637e;">60ms</span>
<span class="t" style="left:1347.2px;top:649.7px;font-size:24px;letter-spacing:1.00px;color:#71637e;">40ms</span>
<span class="t" style="left:1346.2px;top:684.9px;font-size:24px;letter-spacing:1.33px;color:#71637e;">20ms</span>
<span class="t" style="left:1394.7px;top:720.1px;font-size:24px;letter-spacing:0.00px;color:#71637e;">0</span>
<span class="t" style="left:341.6px;top:840.2px;font-size:24px;letter-spacing:0.81px;color:#71637e;">11:00 PM</span>
<span class="t" style="left:514.5px;top:840.2px;font-size:24px;letter-spacing:0.53px;color:#71637e;">3:00 AM</span>
<span class="t" style="left:680.6px;top:840.2px;font-size:24px;letter-spacing:0.33px;color:#71637e;">7:00 AM</span>
<span class="t" style="left:835.5px;top:840.2px;font-size:24px;letter-spacing:1.21px;color:#71637e;">11:00 AM</span>
<span class="t" style="left:1174.5px;top:840.2px;font-size:24px;letter-spacing:0.08px;color:#71637e;">7:00 PM</span>
<span class="t" style="left:1454.6px;top:756.5px;font-size:24px;letter-spacing:0.81px;color:#71637e;">11:00 PM</span>
<span class="t" style="left:1628.3px;top:756.5px;font-size:24px;letter-spacing:0.48px;color:#71637e;">3:00 AM</span>
<span class="t" style="left:1794.4px;top:756.5px;font-size:24px;letter-spacing:0.40px;color:#71637e;">7:00 AM</span>
<span class="t" style="left:1951.0px;top:756.5px;font-size:24px;letter-spacing:1.14px;color:#71637e;">11:00 AM</span>
<span class="t" style="left:2125.0px;top:756.5px;font-size:24px;letter-spacing:0.25px;color:#71637e;">3:00 PM</span>
<span class="t" style="left:2290.5px;top:756.5px;font-size:24px;letter-spacing:0.25px;color:#71637e;">7:00 PM</span>
<span class="t" style="left:1434.7px;top:611.0px;font-size:21.5px;letter-spacing:0.47px;color:#2b2233;">Past</span>
<span class="t" style="left:2290.7px;top:583.3px;font-size:21.5px;letter-spacing:0.37px;color:#2b2233;">Present</span>
<div class="a" style="left:872px;top:507px;width:376px;height:506px;border-radius:9px;background:#fff;border:2px solid #dcd7e2;box-shadow:0 6px 50px rgba(43,34,51,.13),0 2px 6px rgba(43,34,51,.06)"></div>
<div class="a" style="left:874px;top:567px;width:372px;height:2px;background:#f0ecf3"></div>
<div class="a" style="left:882px;top:577px;width:356px;height:70px;border-radius:9px;background:#f2f1f3"></div>
<span class="t" style="left:898.2px;top:524.9px;font-size:23.5px;letter-spacing:0.09px;color:#2b1d38;font-weight:700;">Example Profiles</span>
<span class="t" style="left:905.9px;top:599.8px;font-size:26px;letter-spacing:2.53px;color:#3e3446;">9d3240a3</span>
<span class="t" style="left:1116.8px;top:599.8px;font-size:26px;letter-spacing:1.88px;color:#3e3446;text-decoration:underline dotted #8d8298;text-decoration-thickness:2px;text-underline-offset:3px;">9h ago</span>
<span class="t" style="left:906.0px;top:670.8px;font-size:26px;letter-spacing:1.47px;color:#3e3446;">7d12fa50</span>
<span class="t" style="left:1102.3px;top:670.8px;font-size:26px;letter-spacing:1.65px;color:#3e3446;text-decoration:underline dotted #8d8298;text-decoration-thickness:2px;text-underline-offset:3px;">10h ago</span>
<span class="t" style="left:906.0px;top:741.8px;font-size:26px;letter-spacing:2.61px;color:#3e3446;">3a95d3f8</span>
<span class="t" style="left:1103.3px;top:741.8px;font-size:26px;letter-spacing:1.48px;color:#3e3446;text-decoration:underline dotted #8d8298;text-decoration-thickness:2px;text-underline-offset:3px;">12h ago</span>
<span class="t" style="left:906.0px;top:812.8px;font-size:26px;letter-spacing:1.69px;color:#3e3446;">a581ed36</span>
<span class="t" style="left:1103.3px;top:812.8px;font-size:26px;letter-spacing:1.48px;color:#3e3446;text-decoration:underline dotted #8d8298;text-decoration-thickness:2px;text-underline-offset:3px;">13h ago</span>
<span class="t" style="left:906.0px;top:883.8px;font-size:26px;letter-spacing:2.83px;color:#3e3446;">8b3fa902</span>
<span class="t" style="left:1103.3px;top:883.8px;font-size:26px;letter-spacing:1.48px;color:#3e3446;text-decoration:underline dotted #8d8298;text-decoration-thickness:2px;text-underline-offset:3px;">15h ago</span>
<span class="t" style="left:906.0px;top:954.8px;font-size:26px;letter-spacing:1.83px;color:#3e3446;">9b72aa3d</span>
<span class="t" style="left:1102.3px;top:954.8px;font-size:26px;letter-spacing:1.65px;color:#3e3446;text-decoration:underline dotted #8d8298;text-decoration-thickness:2px;text-underline-offset:3px;">18h ago</span>
<div class="a" style="left:136px;top:1430px;width:2100px;height:72px;background:radial-gradient(ellipse 52% 100% at 45% 100%,rgba(20,15,30,.10),rgba(20,15,30,.04) 55%,rgba(20,15,30,0) 100%)"></div>
</body></html>
